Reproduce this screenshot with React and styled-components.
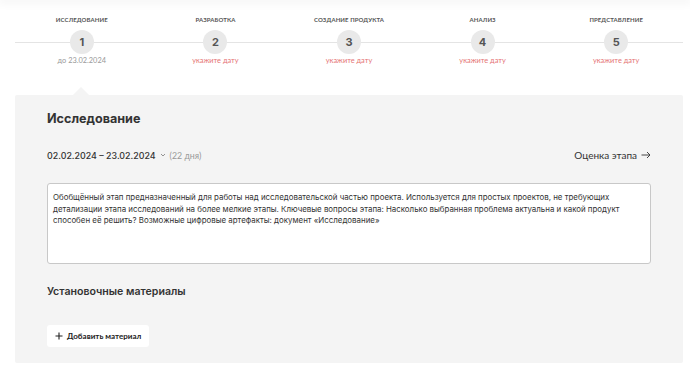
import React from 'react';
import styled, { createGlobalStyle } from 'styled-components';

const GlobalStyle = createGlobalStyle`
  html, body {
    margin: 0;
    padding: 0;
    background: #fff;
    font-family: 'Lato', 'Inter', sans-serif;
    color: #333;
  }
`;

const TopShadow = styled.div`
  height: 0;
  box-shadow: 0 0 10px 2px rgba(0, 0, 0, 0.08);
`;

const Page = styled.div`
  margin-left: 15px;
  width: 668px;
`;

const Stepper = styled.div`
  position: relative;
  display: grid;
  grid-template-columns: repeat(5, 1fr);
  padding-top: 15px;

  &::before {
    content: '';
    position: absolute;
    left: 0;
    right: 0;
    top: 42px;
    height: 1px;
    background: #e4e4e4;
  }
`;

const Step = styled.div`
  display: flex;
  flex-direction: column;
  align-items: center;
  position: relative;
`;

const StepLabel = styled.div`
  height: 10px;
  line-height: 10px;
  font-family: 'Lato', sans-serif;
  font-size: 6px;
  font-weight: 700;
  text-transform: uppercase;
  color: #555;
  letter-spacing: 0.1px;
`;

const Circle = styled.div`
  margin-top: 5px;
  width: 24px;
  height: 24px;
  border-radius: 50%;
  background: #e9e9e9;
  display: flex;
  align-items: center;
  justify-content: center;
  font-family: 'Inter', sans-serif;
  font-size: 11px;
  font-weight: 700;
  color: #555;
`;

const StepDate = styled.div`
  margin-top: 2px;
  height: 10px;
  line-height: 10px;
  font-family: 'Lato', sans-serif;
  font-size: 7.4px;
  color: ${(p) => (p.$missing ? '#e57373' : '#999')};
`;

const Panel = styled.div`
  position: relative;
  margin-top: 29px;
  background: #f4f4f4;
  border-radius: 2px;
  padding: 15px 32px 16px;

  &::before {
    content: '';
    position: absolute;
    top: -8px;
    left: 58px;
    border-left: 8px solid transparent;
    border-right: 8px solid transparent;
    border-bottom: 8px solid #f4f4f4;
  }
`;

const Title = styled.h2`
  margin: 0;
  font-family: 'Inter', sans-serif;
  font-size: 12.6px;
  line-height: 18px;
  font-weight: 700;
  color: #333;
`;

const DateRow = styled.div`
  margin-top: 20px;
  height: 14px;
  display: flex;
  align-items: center;
  justify-content: space-between;
`;

const Range = styled.div`
  display: flex;
  align-items: center;
  gap: 4px;
  font-family: 'Inter', sans-serif;
  font-size: 8.9px;
  font-weight: 500;
  color: #333;
`;

const Days = styled.span`
  font-family: 'Lato', sans-serif;
  font-size: 8.8px;
  font-weight: 400;
  color: #999;
`;

const Chevron = () => (
  <svg width="6" height="6" viewBox="0 0 6 6" fill="none" stroke="#888" strokeWidth="0.9">
    <path d="M1 2l2 2 2-2" />
  </svg>
);

const Assess = styled.div`
  display: flex;
  align-items: center;
  gap: 4px;
  font-family: 'Lato', sans-serif;
  font-size: 10px;
  color: #333;
`;

const Arrow = () => (
  <svg width="10" height="8" viewBox="0 0 10 8" fill="none" stroke="#333" strokeWidth="0.9">
    <path d="M0.5 4h8.5M6 1l3 3-3 3" />
  </svg>
);

const Description = styled.textarea`
  display: block;
  box-sizing: border-box;
  margin-top: 21px;
  width: 100%;
  height: 81px;
  padding: 8px 5px;
  border: 1px solid #c8c8c8;
  border-radius: 3px;
  background: #fff;
  resize: none;
  outline: none;
  font-family: 'Inter', sans-serif;
  font-size: 7.9px;
  line-height: 11.5px;
  color: #333;
`;

const Subtitle = styled.h3`
  margin: 20px 0 0;
  font-family: 'Inter', sans-serif;
  font-size: 10.6px;
  line-height: 16px;
  font-weight: 600;
  color: #333;
`;

const AddButton = styled.button`
  margin-top: 25px;
  height: 22px;
  padding: 0 8px;
  display: inline-flex;
  align-items: center;
  gap: 4px;
  border: none;
  border-radius: 3px;
  background: #fff;
  font-family: 'Lato', sans-serif;
  font-size: 8px;
  font-weight: 700;
  color: #222;
  cursor: pointer;
`;

const Plus = () => (
  <svg width="8" height="8" viewBox="0 0 8 8" fill="none" stroke="#222" strokeWidth="1.1">
    <path d="M4 0.5v7M0.5 4h7" />
  </svg>
);

const steps = [
  { label: 'Исследование', date: 'до 23.02.2024' },
  { label: 'Разработка' },
  { label: 'Создание продукта' },
  { label: 'Анализ' },
  { label: 'Представление' },
];

const text =
  'Обобщённый этап предназначенный для работы над исследовательской частью проекта. Используется для простых проектов, не требующих детализации этапа исследований на более мелкие этапы. Ключевые вопросы этапа: Насколько выбранная проблема актуальна и какой продукт способен её решить? Возможные цифровые артефакты: документ «Исследование»';

export default function App() {
  return (
    <>
      <GlobalStyle />
      <TopShadow />
      <Page>
        <Stepper>
          {steps.map((s, i) => (
            <Step key={s.label}>
              <StepLabel>{s.label}</StepLabel>
              <Circle>{i + 1}</Circle>
              <StepDate $missing={!s.date}>{s.date || 'укажите дату'}</StepDate>
            </Step>
          ))}
        </Stepper>
        <Panel>
          <Title>Исследование</Title>
          <DateRow>
            <Range>
              02.02.2024 – 23.02.2024
              <Chevron />
              <Days>(22 дня)</Days>
            </Range>
            <Assess>
              Оценка этапа
              <Arrow />
            </Assess>
          </DateRow>
          <Description defaultValue={text} />
          <Subtitle>Установочные материалы</Subtitle>
          <AddButton>
            <Plus />
            Добавить материал
          </AddButton>
        </Panel>
      </Page>
    </>
  );
}
